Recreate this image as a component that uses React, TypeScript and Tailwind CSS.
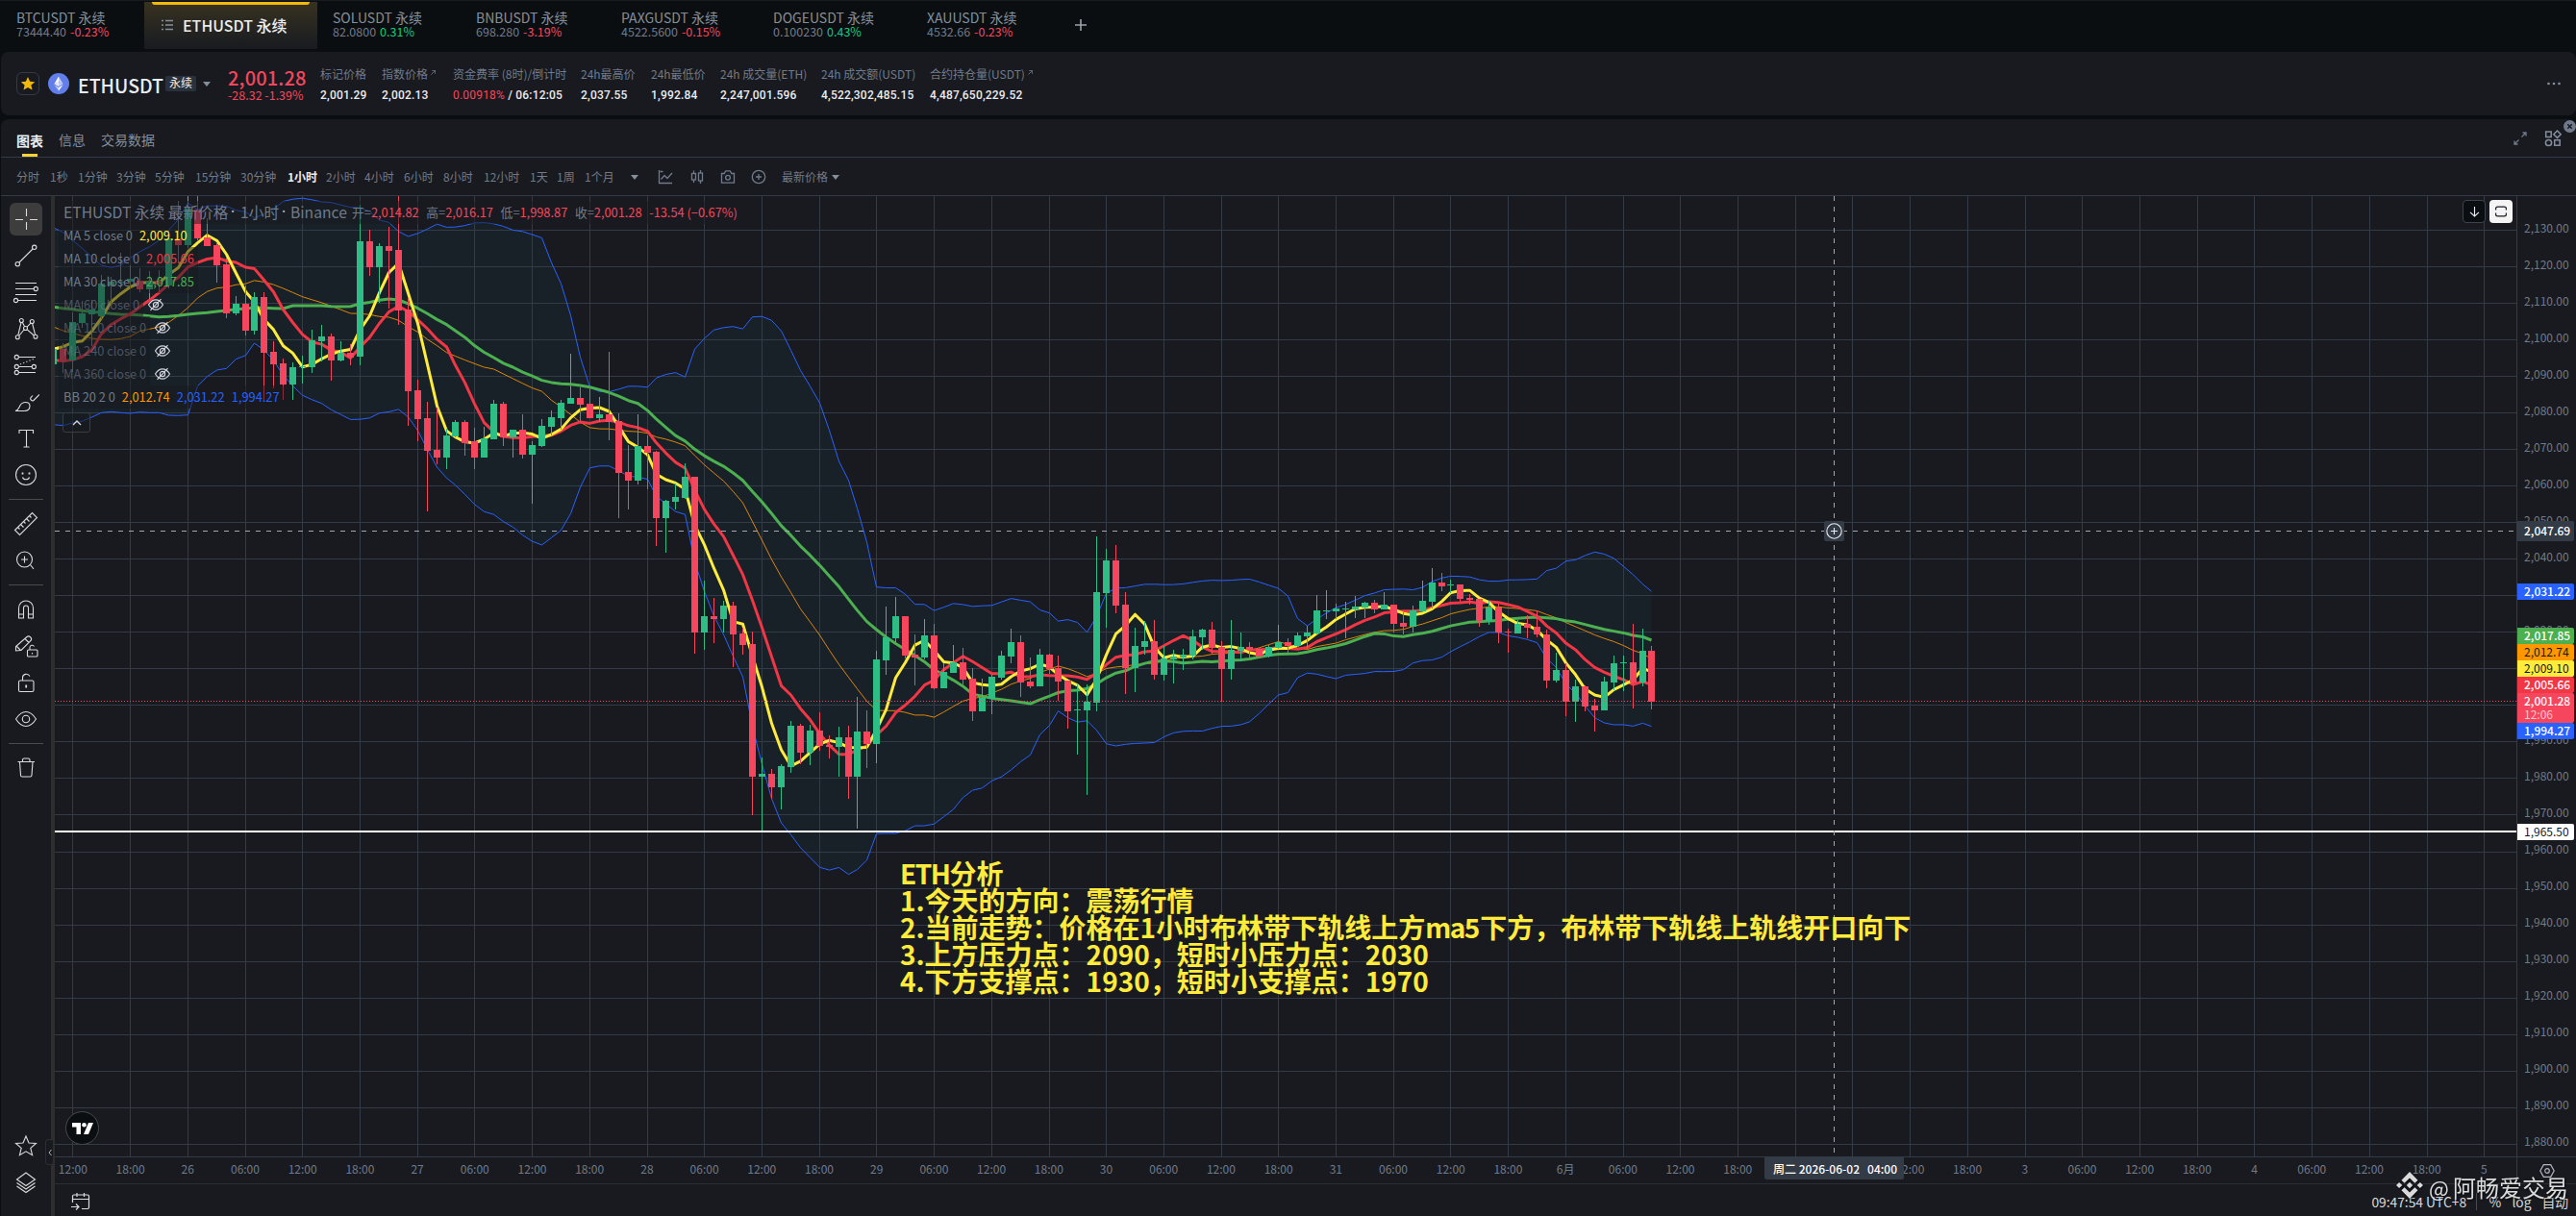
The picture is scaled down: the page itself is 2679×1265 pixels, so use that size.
import type { ReactNode } from "react";

const PANE = { left: 57, top: 204, width: 2560, height: 999 };
const UP = "#2EBD85";
const DOWN = "#F6465D";
const GRID = "#333B47";

// Bars are [up, high, body top, body bottom, low] in thirds of a pixel below `base`
type Bar = [number, number, number, number, number];

const segments: { base: number; bars: Bar[] }[] = [
  {
    base: 190,
    bars: [
      [1, 515, 520, 566, 570], [0, 500, 520, 558, 594], [1, 405, 435, 555, 590], [1, 368, 408, 437, 453],
      [1, 366, 396, 412, 510], [1, 288, 315, 418, 425], [1, 295, 308, 320, 380], [1, 220, 308, 311, 330],
      [1, 258, 300, 308, 330], [0, 266, 306, 332, 341], [1, 276, 308, 332, 362], [0, 272, 306, 318, 345],
      [1, 150, 175, 320, 330], [0, 57, 173, 194, 245], [1, 40, 80, 194, 205], [0, 40, 85, 173, 180],
      [0, 110, 170, 198, 198], [0, 185, 194, 258, 312], [0, 235, 255, 408, 423], [1, 354, 377, 408, 414],
      [0, 320, 377, 462, 477], [1, 342, 357, 462, 474], [0, 342, 357, 531, 678], [0, 495, 528, 567, 642],
      [0, 549, 563, 630, 678], [1, 562, 576, 630, 678], [1, 540, 572, 575, 627], [1, 459, 492, 575, 594],
      [1, 444, 480, 495, 558], [0, 471, 480, 555, 618], [1, 495, 531, 555, 558], [0, 504, 531, 545, 570],
      [1, 68, 183, 543, 570], [0, 147, 183, 264, 291], [1, 189, 198, 264, 375], [0, 138, 198, 213, 393],
      [0, 40, 210, 399, 444], [0, 360, 396, 651, 759], [0, 615, 648, 738, 807], [0, 684, 735, 837, 1026],
      [0, 702, 834, 858, 879], [1, 768, 789, 858, 894], [1, 741, 747, 793, 796], [0, 741, 747, 813, 852],
      [0, 765, 808, 858, 894], [1, 762, 798, 858, 858], [1, 678, 690, 801, 801], [0, 684, 690, 795, 822],
      [1, 771, 771, 796, 858], [0, 723, 771, 849, 861], [1, 807, 819, 849, 1002], [1, 738, 759, 822, 825],
      [1, 711, 732, 762, 789], [1, 678, 687, 735, 772], [1, 534, 672, 690, 690], [0, 639, 672, 693, 747],
      [0, 633, 690, 735, 735], [1, 669, 723, 735, 747], [0, 528, 723, 747, 804], [0, 720, 744, 906, 1047],
      [0, 819, 903, 930, 1020], [1, 723, 822, 930, 942], [0, 789, 822, 843, 957], [0, 837, 840, 1047, 1134],
      [1, 990, 993, 1047, 1155], [1, 939, 981, 996, 1020], [1, 876, 918, 984, 986],
    ],
  },
  {
    base: 440,
    bars: [
      [0, 168, 168, 654, 720], [1, 492, 603, 654, 708], [0, 546, 603, 612, 687], [1, 555, 570, 612, 654],
      [0, 558, 570, 660, 762], [0, 639, 657, 693, 723], [0, 651, 690, 1104, 1224], [1, 1044, 1095, 1104, 1272],
      [0, 1080, 1095, 1137, 1173], [1, 1065, 1071, 1137, 1206], [1, 930, 945, 1074, 1092], [0, 939, 945, 1029, 1065],
      [1, 942, 960, 1029, 1068], [0, 903, 960, 1008, 1023], [0, 975, 1005, 1011, 1047], [1, 948, 981, 1011, 1104],
      [0, 945, 981, 1104, 1173], [1, 855, 963, 1104, 1266], [0, 897, 963, 1002, 1077], [1, 711, 738, 1002, 1062],
      [1, 573, 669, 741, 786], [1, 543, 603, 672, 684], [0, 603, 603, 726, 735], [0, 660, 723, 732, 819],
      [1, 612, 663, 732, 738], [0, 627, 663, 828, 831], [1, 750, 777, 828, 828], [1, 693, 747, 780, 780],
      [0, 702, 747, 801, 816], [0, 765, 798, 900, 930], [1, 798, 858, 900, 900], [1, 786, 792, 861, 909],
      [1, 711, 726, 795, 801], [1, 642, 684, 729, 750], [0, 663, 684, 810, 855], [0, 732, 807, 822, 828],
      [1, 705, 723, 822, 822], [0, 720, 723, 768, 783], [0, 726, 765, 807, 867], [0, 804, 804, 900, 954],
    ],
  },
  {
    base: 540,
    bars: [
      [1, 516, 594, 597, 735], [1, 516, 570, 597, 861], [1, 54, 228, 573, 600], [1, 93, 129, 231, 339],
      [0, 81, 129, 270, 294], [0, 228, 267, 465, 546], [1, 339, 396, 465, 540], [1, 318, 381, 399, 423],
      [0, 315, 381, 486, 501], [1, 396, 435, 486, 504], [1, 408, 429, 438, 513], [1, 405, 423, 432, 471],
      [1, 345, 366, 426, 438], [1, 342, 345, 369, 408], [0, 321, 345, 402, 420], [0, 381, 399, 468, 570],
      [1, 315, 408, 468, 501], [1, 354, 399, 411, 444], [0, 384, 399, 408, 435], [0, 402, 405, 429, 432],
      [1, 393, 399, 429, 432], [1, 330, 384, 402, 405], [0, 372, 384, 396, 417], [1, 354, 363, 396, 399],
      [1, 333, 354, 366, 402], [1, 237, 285, 357, 360], [1, 222, 285, 288, 312], [1, 264, 279, 288, 312],
      [1, 258, 279, 282, 372], [1, 240, 273, 282, 309], [1, 258, 261, 276, 309], [0, 252, 261, 282, 294],
      [1, 228, 267, 282, 282], [0, 267, 267, 327, 354], [0, 291, 324, 336, 360], [1, 270, 285, 336, 354],
      [1, 192, 255, 288, 288], [1, 153, 198, 258, 279], [0, 168, 198, 210, 225], [1, 189, 204, 207, 231],
      [0, 204, 204, 249, 258], [0, 234, 246, 252, 267], [0, 249, 249, 318, 336], [1, 255, 276, 318, 330],
      [0, 264, 276, 354, 387], [0, 342, 351, 354, 417], [1, 315, 327, 357, 357], [0, 300, 327, 339, 372],
      [0, 285, 336, 360, 369], [0, 345, 360, 504, 528], [1, 417, 471, 504, 510], [0, 450, 471, 570, 615],
      [1, 501, 522, 570, 633], [0, 519, 522, 585, 600], [0, 561, 582, 597, 663], [1, 492, 507, 597, 597],
      [1, 426, 450, 510, 534], [1, 426, 447, 450, 537], [0, 327, 447, 510, 591], [1, 342, 411, 510, 522],
      [0, 396, 411, 570, 594],
    ],
  },
];

const bars = segments.flatMap(({ base, bars }) =>
  bars.map(([up, ...v]) => {
    const [high, top, bottom, low] = v.map((n) => base + n / 3);
    return { up: up === 1, high, top, bottom, low, close: up ? top : bottom };
  })
);

// the first bar sits two hours left of the first grid line
const hourX = (hour: number) => Math.floor(75.9 + 9.952 * hour);
const barX = (i: number) => hourX(i - 2);

const mean = (v: number[]) => v.reduce((a, b) => a + b, 0) / v.length;
const closes = bars.map((b) => b.close);
const lookback = (i: number, n: number) => closes.slice(i - n + 1, i + 1);

// values before the window is full come from older history
function series(seed: number[], n: number, fn: (v: number[]) => number) {
  return closes.map((_, i) => (i < seed.length || i < n - 1 ? 190 + seed[i] / 3 : fn(lookback(i, n))));
}

const spread = (v: number[]) => {
  const m = mean(v);
  return 2 * Math.sqrt(mean(v.map((x) => (x - m) ** 2)));
};

const ma5 = series([520, 512, 499, 494], 5, mean);
const ma10 = series([553, 557, 553, 543, 522, 472, 443, 425, 410], 10, mean);
const ma30 = series(
  [388, 392, 395, 400, 403, 406, 409, 411, 412, 413, 416, 419, 418, 415, 411, 408, 406, 402, 399, 395, 393, 390, 391, 392, 393, 384, 384, 384, 384],
  30,
  mean
);
const bbMid = series([450, 462, 470, 478, 486, 489, 490, 487, 480, 463, 457, 450, 436, 415, 390, 360, 340, 329, 326], 20, mean);
const bbUp = series([140, 155, 180, 205, 232, 258, 265, 258, 235, 215, 200, 180, 148, 115, 63, 85, 72, 73, 73], 20, (v) => mean(v) - spread(v));
const bbLow = series([755, 758, 750, 745, 732, 718, 715, 718, 720, 716, 718, 718, 726, 727, 725, 635, 605, 585, 580], 20, (v) => mean(v) + spread(v));

const points = (v: number[]) => v.map((y, i) => `${barX(i) + 0.5},${y.toFixed(1)}`);
const line = (v: number[]) => points(v).join(" ");

const priceY = (p: number) => 239.5 + (2130 - p) * 3.803;
const prices = Array.from({ length: 26 }, (_, i) => 2130 - i * 10);
const fmt = (n: number) => n.toLocaleString("en-US", { minimumFractionDigits: 2 });

const days = ["26", "27", "28", "29", "30", "31", "6月", "2", "3", "4", "5"];
const timeLabels = Array.from({ length: 43 }, (_, k) => {
  const q = (k + 2) % 4;
  return q === 0 ? days[(k - 2) / 4] : ["", "06:00", "12:00", "18:00"][q];
});

const tickers = [
  { name: "SOLUSDT 永续", price: "82.0800", change: "0.31%", up: true, width: "w-[149px]" },
  { name: "BNBUSDT 永续", price: "698.280", change: "-3.19%", up: false, width: "w-[151px]" },
  { name: "PAXGUSDT 永续", price: "4522.5600", change: "-0.15%", up: false, width: "w-[158px]" },
  { name: "DOGEUSDT 永续", price: "0.100230", change: "0.43%", up: true, width: "w-[160px]" },
  { name: "XAUUSDT 永续", price: "4532.66", change: "-0.23%", up: false, width: "w-[150px]" },
];

const stats = [
  { label: "标记价格", value: "2,001.29", width: "w-[64px]" },
  { label: "指数价格", value: "2,002.13", width: "w-[74px]", link: true },
  { label: "资金费率 (8时)/倒计时", value: "0.00918%", extra: " / 06:12:05", width: "w-[133px]" },
  { label: "24h最高价", value: "2,037.55", width: "w-[73px]" },
  { label: "24h最低价", value: "1,992.84", width: "w-[72px]" },
  { label: "24h 成交量(ETH)", value: "2,247,001.596", width: "w-[105px]" },
  { label: "24h 成交额(USDT)", value: "4,522,302,485.15", width: "w-[113px]" },
  { label: "合约持仓量(USDT)", value: "4,487,650,229.52", width: "w-[140px]", link: true },
];

const intervals = [
  { label: "分时", width: "w-[35px]" },
  { label: "1秒", width: "w-[29px]" },
  { label: "1分钟", width: "w-[40px]" },
  { label: "3分钟", width: "w-[40px]" },
  { label: "5分钟", width: "w-[42px]" },
  { label: "15分钟", width: "w-[47px]" },
  { label: "30分钟", width: "w-[49px]" },
  { label: "1小时", width: "w-[40px]" },
  { label: "2小时", width: "w-[40px]" },
  { label: "4小时", width: "w-[41px]" },
  { label: "6小时", width: "w-[41px]" },
  { label: "8小时", width: "w-[42px]" },
  { label: "12小时", width: "w-[48px]" },
  { label: "1天", width: "w-[28px]" },
  { label: "1周", width: "w-[29px]" },
  { label: "1个月", width: "w-[48px]" },
];

const legendRows = [
  { label: "MA 5 close 0", value: "2,009.10", color: "text-[#FFEB3B]" },
  { label: "MA 10 close 0", value: "2,005.66", color: "text-[#F23645]" },
  { label: "MA 30 close 0", value: "2,017.85", color: "text-[#4CAF50]" },
  { label: "MA 60 close 0" },
  { label: "MA 120 close 0" },
  { label: "MA 240 close 0" },
  { label: "MA 360 close 0" },
];

const ohlc = [
  { label: "开", value: "2,014.82" },
  { label: "高", value: "2,016.17" },
  { label: "低", value: "1,998.87" },
  { label: "收", value: "2,001.28" },
];

const badges = [
  { text: "2,031.22", cls: "top-[403px] bg-[#2962FF] text-white font-medium" },
  { text: "2,017.85", cls: "top-[449px] bg-[#4CAF50] text-white font-medium" },
  { text: "2,012.74", cls: "top-[466px] bg-[#FF9800] text-[#131722]" },
  { text: "2,009.10", cls: "top-[483px] bg-[#FFEB3B] text-[#131722]" },
  { text: "2,005.66", cls: "top-[500px] bg-[#F23645] text-white font-medium" },
  { text: "1,994.27", cls: "top-[548px] bg-[#2962FF] text-white font-medium" },
  { text: "1,965.50", cls: "top-[653px] bg-white text-[#131722]" },
];

function Caret({ className = "" }: { className?: string }) {
  return (
    <svg viewBox="0 0 8 5" className={`w-2 h-[5px] shrink-0 ${className}`}>
      <path d="M0 0h8L4 5z" fill="#848E9C" />
    </svg>
  );
}

function ToolGlyph({ type }: { type: string }) {
  const props = { viewBox: "0 0 28 28", fill: "none", stroke: "currentColor", strokeWidth: 1.1, className: "w-7 h-7" };
  switch (type) {
    case "cross":
      return <svg {...props}><path d="M14.5 3v8M14.5 17v8M3 14.5h8M18 14.5h8" /></svg>;
    case "trend":
      return <svg {...props}><circle cx="5.3" cy="22.7" r="2.2" /><circle cx="22.7" cy="5.3" r="2.2" /><path d="M7 21L21 7" /></svg>;
    case "fib":
      return <svg {...props}><path d="M3 4.5h22M3 10.5h19.5M3 16.5h22M6 22.5h19" /><circle cx="24.3" cy="10.5" r="2.1" /><circle cx="3.5" cy="22.5" r="2.1" /></svg>;
    case "pattern":
      return <svg {...props}><circle cx="9.3" cy="5.5" r="2" /><circle cx="20.3" cy="6.5" r="2" /><circle cx="5.3" cy="22.7" r="2" /><circle cx="24" cy="22.3" r="2" /><circle cx="13.5" cy="13.5" r="2" /><path d="M9 7.5L5.8 20.7M20.6 8.5l3 11.8M10.3 7.3l2.3 4.5M19 8.2l-4 4M7 21l5-6M15.3 14.8l7 6.2" /></svg>;
    case "projection":
      return <svg {...props}><circle cx="4.3" cy="5.5" r="2.1" /><circle cx="4.3" cy="15.5" r="2.1" /><circle cx="22.3" cy="15.5" r="2.1" /><circle cx="4.3" cy="21.5" r="2.1" /><path d="M6.5 5.5H24M6.5 15.5h13.7M6.5 21.5H24" /><path d="M8 13L23 7" strokeDasharray="1.2 2.2" /></svg>;
    case "brush":
      return <svg {...props}><path d="M3 23.5c3.500-1 3.500-3 4.800-5.500 1.200-2.300 3.200-3.500 5.700-3.500 2.500 0 4.500 1.500 4.500 3.800 0 3.200-2.300 5.200-5.500 5.200z" /><path d="M28 6.500L22 12.500c-1.500 1.200-4.200-1-3-2.800L21 7.500" /></svg>;
    case "text":
      return <svg {...props}><path d="M7 9V5.500h14.500V9M14.500 5.500v17.500M11.500 23h6" /></svg>;
    case "smile":
      return <svg {...props}><circle cx="14" cy="14" r="10.500" /><path d="M10.500 16.500c1 3 6 3 7 0" /><path d="M10.500 11.500v2M17.500 11.500v2" strokeWidth="1.800" /></svg>;
    case "ruler":
      return <svg {...props}><path d="M2.500 20.500L20.500 2.500l5 5L7.500 25.500z" /><path d="M5.500 17.500l2 2M8.500 14.500l3 3M11.500 11.500l2 2M14.500 8.500l3 3M17.500 5.500l2 2" /></svg>;
    case "zoom":
      return <svg {...props}><circle cx="12.500" cy="13" r="8" /><path d="M12.500 9.500v7M9 13h7M18.500 18.500L22 23" /></svg>;
    case "magnet":
      return <svg {...props}><path d="M6.500 23V12.500a7.500 7.500 0 0115 0V23h-5V12.500a2.500 2.500 0 00-5 0V23zM6.500 19h5M16.500 19h5" /></svg>;
    case "pencil":
      return <svg {...props}><path d="M3.500 19v-4.500L15 4.500c2.500-2 6 1.500 4 4L9 18.500zM13 6.500l4 4M4.500 14.500l4 4" /><rect x="15.500" y="18" width="10.500" height="7" rx="1" /><path d="M18 18v-2.500c0-2.500 3.500-3 4.500-1M20.500 21v1.500" /></svg>;
    case "lock":
      return <svg {...props}><rect x="6.500" y="12" width="15.500" height="11.500" rx="1.500" /><path d="M10.500 12V9c0-4 5.500-5.200 7.500-1.500" /><path d="M14.200 16.500v3" strokeWidth="1.800" /></svg>;
    case "eye":
      return <svg {...props}><path d="M3.500 14c3.500-5.500 6.500-7.500 10.500-7.500s7 2 10.500 7.500c-3.500 5.500-6.500 7.500-10.500 7.500S7 19.500 3.500 14z" /><circle cx="14" cy="14" r="3.700" /></svg>;
    case "trash":
      return <svg {...props}><path d="M5.500 7.500h17.500M10.500 7V5.500c0-1 .7-1.500 1.500-1.500h4.500c.8 0 1.500.5 1.500 1.500V7M7.500 7.500l1 14c.1 1 .7 1.500 1.500 1.500h8.500c.8 0 1.400-.5 1.500-1.500L21 7.500" /></svg>;
    case "star":
      return <svg {...props}><path d="M14 4l3 7 7.500.500-5.700 4.900 1.800 7.300L14 19.800l-6.600 3.900 1.800-7.300-5.700-4.900L11 11z" /></svg>;
    default:
      return <svg {...props}><path d="M14 4l9.500 7L14 17.500 4.500 11zM4.500 14.500L14 21l9.500-6.500M4.500 18L14 24.500l9.500-6.500" /></svg>;
  }
}

function Tool({ type, active }: { type: string; active?: boolean }) {
  return (
    <div className="h-[38px] flex items-center justify-center text-[#DBDBDB]">
      <div className={active ? "w-[34px] h-[34px] rounded-md bg-[#3D3D3D] flex items-center justify-center" : "flex"}>
        <ToolGlyph type={type} />
      </div>
    </div>
  );
}

function Separator() {
  return (
    <div className="h-[13px] flex items-center justify-center">
      <div className="w-9 h-px bg-[#4A4A4A]" />
    </div>
  );
}

function HiddenEye() {
  return (
    <svg viewBox="0 0 18 14" className="w-[18px] h-[14px]" fill="none" stroke="#D1D4DC" strokeWidth="1.200">
      <path d="M1.500 7C4 3 6.500 1.800 9 1.800S14 3 16.500 7C14 11 11.500 12.200 9 12.200S4 11 1.500 7z" />
      <circle cx="9" cy="7" r="2.600" />
      <path d="M3.500 12.800L14.500 1.200" />
    </svg>
  );
}

function TickerTab({ name, price, change, up, width }: { name: string; price: string; change: string; up: boolean; width: string }) {
  return (
    <div className={`${width} pl-4 pt-[9px] shrink-0`}>
      <div className="text-[14px] leading-4 text-[#848E9C]">{name}</div>
      <div className="text-[12.500px] leading-[13px] flex gap-1">
        <span className="text-[#707A8A]">{price}</span>
        <span className={up ? "text-[#0ECB81]" : "text-[#F6465D]"}>{change}</span>
      </div>
    </div>
  );
}

function TopTabs() {
  return (
    <div className="h-[54px] flex border-t border-[#181A20]">
      <div className="ml-px flex">
        <TickerTab name="BTCUSDT 永续" price="73444.40" change="-0.23%" up={false} width="w-[149px]" />
      </div>
      <div className="w-[180px] h-[49px] mt-px bg-linear-to-b from-[#38321F] to-[#181A20] flex flex-col">
        <div className="h-[3px] mx-2 bg-[#F0B90B] rounded-b-sm" />
        <div className="flex items-center pl-[18px] h-[42px] gap-[10px]">
          <svg viewBox="0 0 12 12" className="w-3 h-3" stroke="#848E9C" strokeWidth="1.500">
            <path d="M0 1.500h2M4 1.500h8M0 6h2M4 6h8M0 10.500h2M4 10.500h8" />
          </svg>
          <span className="text-[16px] font-medium text-[#EAECEF]">ETHUSDT 永续</span>
        </div>
      </div>
      {tickers.map((t) => (
        <TickerTab key={t.name} {...t} />
      ))}
      <svg viewBox="0 0 12 12" className="w-3 h-3 mt-[19px] ml-5" stroke="#9AA2AD" strokeWidth="1.600">
        <path d="M6 0v12M0 6h12" />
      </svg>
    </div>
  );
}

function SymbolHeader() {
  return (
    <div className="h-[66px] ml-px rounded-lg bg-[#181A20] flex items-center pl-4 font-[Roboto,'Noto_Sans_CJK_SC',sans-serif]">
      <div className="w-6 h-6 rounded-md border border-[#333B47] flex items-center justify-center">
        <svg viewBox="0 0 24 24" className="w-4 h-4" fill="#F0B90B">
          <path d="M12 1.500l3.200 7 7.600.8-5.700 5.100 1.600 7.500L12 18.100l-6.700 3.800 1.600-7.500L1.200 9.300l7.600-.8z" />
        </svg>
      </div>
      <svg viewBox="0 0 22 22" className="w-[22px] h-[22px] ml-[9px]">
        <circle cx="11" cy="11" r="11" fill="#627EEA" />
        <path d="M11 3.500v5.700l4.600 2z" fill="#C0CCF7" />
        <path d="M11 3.500l-4.600 7.700 4.600-2zM11 14.900v3.600l4.600-6.300z" fill="#fff" />
        <path d="M11 18.500v-3.600l-4.600-2.700zM11 14l4.600-2.800-4.600-2z" fill="#C0CCF7" />
        <path d="M6.400 11.200L11 14V9.200z" fill="#E6EBFC" />
      </svg>
      <span className="w-[100px] pl-[9px] pt-[3px] text-[19.500px] font-medium text-[#EAECEF] font-['Noto_Sans_CJK_SC']">ETHUSDT</span>
      <span className="w-8 h-4 rounded-xs bg-[#29313D] text-[#EAECEF] text-[12px] leading-4 text-center">永续</span>
      <Caret className="ml-[7px]" />
      <div className="ml-[18px] w-[96px] text-[#F6465D]">
        <div className="text-[20px] leading-6 tracking-[0.15px] font-['Noto_Sans_CJK_SC'] font-medium">2,001.28</div>
        <div className="text-[12.500px] leading-3 whitespace-nowrap font-['Noto_Sans_CJK_SC']">-28.32 -1.39%</div>
      </div>
      {stats.map((s) => (
        <div key={s.label} className={`${s.width} shrink-0 flex flex-col gap-2 pt-px text-[12px] leading-[15px] whitespace-nowrap`}>
          <div className="text-[#707A8A] flex font-['Noto_Sans_CJK_SC']">
            {s.label}
            {s.link && (
              <svg viewBox="0 0 6 6" className="w-[5px] h-[5px] mt-1 ml-[3px]" fill="none" stroke="#707A8A">
                <path d="M.5 5.500l5-5M1.500.5h4v4" />
              </svg>
            )}
          </div>
          <div className="text-[#EAECEF] font-medium tracking-[0.2px]">
            {s.extra ? (
              <>
                <span className="text-[#F6465D] font-normal">{s.value}</span>
                {s.extra}
              </>
            ) : (
              s.value
            )}
          </div>
        </div>
      ))}
      <svg viewBox="0 0 16 4" className="w-4 h-1 ml-auto mr-[15px]" fill="#848E9C">
        <circle cx="2.500" cy="2" r="1.300" /><circle cx="8" cy="2" r="1.300" /><circle cx="13.500" cy="2" r="1.300" />
      </svg>
    </div>
  );
}

function PanelTabs() {
  return (
    <div className="h-10 flex items-center pl-4 border-b border-[#333B47] text-[14px] text-[#848E9C] relative">
      <div className="w-11 h-full flex flex-col items-start">
        <span className="h-9 leading-[44px] font-bold text-[#EAECEF]">图表</span>
        <span className="w-4 h-[3px] ml-1.5 bg-[#FCD535]" />
      </div>
      <span className="w-11 pt-1">信息</span>
      <span className="pt-1">交易数据</span>
      <svg viewBox="0 0 14 14" className="w-[14px] h-[14px] ml-auto" fill="none" stroke="#707A8A" strokeWidth="1.300">
        <path d="M1 13L5.500 8.500M8.500 5.500L13 1M9.500 1H13v3.500M4.500 13H1V9.500" />
      </svg>
      <svg viewBox="0 0 18 18" className="w-[18px] h-[18px] ml-[18px] mr-[15px]" fill="none" stroke="#848E9C" strokeWidth="1.500">
        <rect x="1.700" y="2" width="5.500" height="5.500" /><rect x="10.700" y="10.700" width="5.500" height="5.500" />
        <circle cx="4.500" cy="13.500" r="3.100" /><path d="M13.500 1l3.700 3.700-3.700 3.700-3.700-3.700z" />
      </svg>
      <svg viewBox="0 0 13 13" className="absolute right-0 top-px w-[13px] h-[13px]">
        <circle cx="6.500" cy="6.500" r="6.500" fill="#707A8A" />
        <path d="M4.300 4.300l4.400 4.400M8.700 4.300L4.300 8.700" stroke="#181A20" strokeWidth="1.500" />
      </svg>
    </div>
  );
}

function IntervalBar() {
  return (
    <div className="h-10 flex items-center pl-4 pt-px border-b border-[#333B47] text-[12px] text-[#707A8A] whitespace-nowrap">
      {intervals.map(({ label, width }) => (
        <span key={label} className={`${width} shrink-0 ${label === "1小时" ? "text-[#EAECEF] font-bold" : ""}`}>{label}</span>
      ))}
      <Caret />
      <svg viewBox="0 0 16 16" className="w-4 h-4 ml-[20px]" fill="none" stroke="#707A8A" strokeWidth="1.300">
        <path d="M1.500 1v13.500H15M3.500 10.500L7 6.500l3 3 5-5.500M2.500 2.500h3" />
      </svg>
      <svg viewBox="0 0 16 16" className="w-4 h-4 ml-[17px]" fill="none" stroke="#707A8A" strokeWidth="1.300">
        <path d="M4.500 1.500v3M4.500 11v3M11.500 1v3M11.500 12v3" /><rect x="2.500" y="4.500" width="4" height="6.500" /><rect x="9.500" y="4" width="4" height="8" />
      </svg>
      <svg viewBox="0 0 16 16" className="w-4 h-4 ml-[16px]" fill="none" stroke="#707A8A" strokeWidth="1.300">
        <path d="M1.500 4.500h2.700l1.500-2.700h4.600l1.500 2.700h2.700v9.700H1.500z" /><circle cx="8" cy="8.800" r="2.400" />
      </svg>
      <svg viewBox="0 0 16 16" className="w-4 h-4 ml-[16px]" fill="none" stroke="#707A8A" strokeWidth="1.300">
        <circle cx="8" cy="8" r="6.700" /><path d="M8 5v6M5 8h6" />
      </svg>
      <span className="ml-[16px]">最新价格</span>
      <Caret className="ml-[4px]" />
    </div>
  );
}

function ChartCanvas() {
  const right = PANE.left + PANE.width;
  const bottom = PANE.top + PANE.height;
  return (
    <svg viewBox={`${PANE.left} ${PANE.top} ${PANE.width} ${PANE.height}`} className="block w-[2560px] h-[999px]">
      <polygon points={[...points(bbUp), ...points(bbLow).reverse()].join(" ")} fill="#2196C3" fillOpacity="0.050" />
      <g fill={GRID} shapeRendering="crispEdges">
        {timeLabels.map((_, k) => (
          <rect key={k} x={hourX(k * 6)} y={PANE.top} width="1" height={PANE.height} />
        ))}
        {prices.map((p) => (
          <rect key={p} x={PANE.left} y={Math.floor(priceY(p))} width={PANE.width} height="1" />
        ))}
      </g>
      <g fill="none" strokeLinejoin="round">
        <polyline points={line(bbMid)} stroke="#FF9800" strokeOpacity="0.850" />
        <polyline points={line(bbUp)} stroke="#2962FF" />
        <polyline points={line(bbLow)} stroke="#2962FF" />
        <polyline points={line(ma30)} stroke="#4CAF50" strokeWidth="3" />
        <polyline points={line(ma10)} stroke="#F23645" strokeWidth="3" />
        <polyline points={line(ma5)} stroke="#FFEB3B" strokeWidth="3" />
      </g>
      <g shapeRendering="crispEdges">
        {bars.map((b, i) => {
          const x = barX(i);
          const top = Math.round(b.top);
          const high = Math.round(b.high);
          return (
            <g key={i} fill={b.up ? UP : DOWN}>
              <rect x={x} y={high} width="1" height={Math.round(b.low) - high} />
              <rect x={x - 3} y={top} width="7" height={Math.max(1, Math.round(b.bottom) - top)} />
            </g>
          );
        })}
        <path d={`M${PANE.left} 729.500H${right}`} stroke={DOWN} strokeDasharray="1 2" />
        <rect x={PANE.left} y="864" width={PANE.width} height="2" fill="#fff" />
        <path d={`M${PANE.left} 552.500H${right}M1907.500 ${PANE.top}V${bottom}`} stroke="#A3A8AF" strokeDasharray="5 6" />
      </g>
    </svg>
  );
}

function Legend() {
  return (
    <div className="absolute left-1 top-[5px] flex flex-col items-start text-[12.800px] text-[#707A8A] whitespace-nowrap">
      <div className="h-6 pl-[5px] pr-2 bg-[#181A20]/50 flex items-center">
        <div className="flex items-center text-[15.700px]">
          <span className="w-[174px]">ETHUSDT 永续 最新价格</span>
          <span className="w-[10px] text-[#B2B5BE] font-['Noto_Sans']">·</span>
          <span className="w-[43px]">1小时</span>
          <span className="w-[9px] text-[#B2B5BE] font-['Noto_Sans']">·</span>
          <span className="w-[64px]">Binance</span>
        </div>
        {ohlc.map((o) => (
          <span key={o.label} className="w-[77.300px]">
            {o.label}=<span className="text-[#F6465D]">{o.value}</span>
          </span>
        ))}
        <span className="text-[#F6465D]">-13.54 (−0.67%)</span>
      </div>
      {legendRows.map((r) => (
        <div key={r.label} className="h-6 flex items-center">
          <span className={`h-6 leading-6 pl-[5px] bg-[#181A20]/50 ${r.value ? "pr-[7px]" : "pr-1 text-[#707A8A]/60"}`}>{r.label}</span>
          {r.value ? (
            <span className={`h-6 leading-6 pr-1 bg-[#181A20]/50 ${r.color}`}>{r.value}</span>
          ) : (
            <span className="ml-1"><HiddenEye /></span>
          )}
        </div>
      ))}
      <div className="h-6 leading-6 pl-[5px] pr-1 bg-[#181A20]/50 flex">
        <span className="mr-[7px]">BB 20 2 0</span>
        <span className="w-[57px] text-[#FF9800]">2,012.74</span>
        <span className="w-[57px] text-[#2962FF]">2,031.22</span>
        <span className="text-[#2962FF]">1,994.27</span>
      </div>
      <div className="mt-[4px] ml-1 w-[29px] h-[21px] rounded-[3px] border border-[#3D3D3D] bg-[#181A20]/60 flex items-center justify-center">
        <svg viewBox="0 0 10 6" className="w-[10px] h-1.5" fill="none" stroke="#D1D4DC" strokeWidth="1.300">
          <path d="M1 5l4-4 4 4" />
        </svg>
      </div>
    </div>
  );
}

function Notes() {
  return (
    <div className="absolute left-[879px] top-[690px] text-[28px] leading-7 font-bold text-[#FFEB3B] whitespace-nowrap">
      <div><span className="tracking-[-1.500px]">ETH</span>分析</div>
      <div>1.今天的方向：震荡行情</div>
      <div>2.当前走势：价格在1小时布林带下轨线上方<span className="tracking-[-1.500px]">ma</span>5下方，布林带下轨线上轨线开口向下</div>
      <div>3.上方压力点：2090，短时小压力点：2030</div>
      <div>4.下方支撑点：1930，短时小支撑点：1970</div>
    </div>
  );
}

function Overlay({ className, children }: { className: string; children: ReactNode }) {
  return <div className={`absolute flex items-center justify-center ${className}`}>{children}</div>;
}

function PriceAxis() {
  return (
    <div className="relative w-[62px] h-[999px] border-l border-[#333B47] overflow-hidden text-[12px] text-[#707A8A] pt-[14px]">
      {prices.map((p) => (
        <div key={p} className="h-[38.030px] leading-[38px] pl-[7px]">{fmt(p)}</div>
      ))}
      <div className="absolute left-0 top-[338px] w-[59px] h-[21px] leading-[19px] pl-[7px] rounded-r-xs bg-[#333B47] text-white font-medium">2,047.69</div>
      {badges.map((b) => (
        <div key={b.text} className={`absolute left-0 w-[59px] h-[17px] leading-[15px] pl-[7px] rounded-r-xs ${b.cls}`}>{b.text}</div>
      ))}
      <div className="absolute left-0 top-[517px] w-[59px] h-[31px] pl-[7px] rounded-r-xs bg-[#F6465D] text-white">
        <div className="leading-[15px] font-medium">2,001.28</div>
        <div className="leading-[13px] text-white/70">12:06</div>
      </div>
    </div>
  );
}

function TimeAxis() {
  return (
    <div className="relative h-7 border-t border-[#333B47] flex">
      <div className="w-[2560px] shrink-0 overflow-hidden flex text-[12px] leading-[24px] text-[#707A8A]">
        {timeLabels.map((t, k) => (
          <span key={k} className="w-[59.712px] shrink-0 text-center first:-ml-[11px]">{t}</span>
        ))}
      </div>
      <div className="w-[62px] border-l border-[#333B47] flex items-center justify-center">
        <svg viewBox="0 0 16 16" className="w-4 h-4" fill="none" stroke="#B2B5BE" strokeWidth="1.200">
          <path d="M4.300 1.700h7.400L15.200 8l-3.500 6.300H4.300L.8 8z" /><circle cx="8" cy="8" r="2.300" />
        </svg>
      </div>
      <div className="absolute left-[1778px] -top-px w-[145px] h-6 rounded-b-xs bg-[#333B47] text-white text-[12px] leading-[25px] font-medium pl-[9px] whitespace-pre">周二 2026-06-02   04:00</div>
    </div>
  );
}

function Footer() {
  return (
    <div className="relative flex-1 border-t border-[#2A2E35] flex items-center text-[13.800px] text-[#DBDBDB]">
      <svg viewBox="0 0 20 20" className="w-5 h-5 ml-[17px] mt-0.5" fill="none" stroke="currentColor" strokeWidth="1.200">
        <path d="M1.500 11V4.500c0-1 .5-1.500 1.500-1.500h14c1 0 1.500.5 1.500 1.500V16c0 1-.5 1.500-1.500 1.500h-6M1.500 7.500h17M6 1v4M13.500 1v4M0 15.500h7.500M5 12.500l3 3-3 3" />
      </svg>
      <div className="ml-auto flex items-center pt-[3px] pr-2 whitespace-nowrap">
        <span className="w-[109px]">09:47:54 UTC+8</span>
        <span className="w-px h-[18px] bg-[#4A4A4A]" />
        <span className="ml-3 w-6">%</span>
        <span className="w-[31px]">log</span>
        <span>自动</span>
      </div>
      <div className="absolute right-[8px] -top-[13px] h-8 flex items-center text-white/85 text-[24px] leading-8 whitespace-nowrap drop-shadow-[1px_1px_1px_rgba(0,0,0,0.8)]">
        <svg viewBox="0 0 28 28" className="w-7 h-7 mr-1.5 -mt-1" fill="currentColor">
          <path d="M8.600 11.800L14 6.400l5.400 5.400 3.100-3.100L14 0 5.500 8.700zM0 14l3.100-3.100L6.300 14l-3.200 3.100zM8.600 16.200L14 21.600l5.400-5.400 3.100 3.100L14 28l-8.500-8.700zM21.700 14l3.200-3.100L28 14l-3.100 3.100zM17.200 14L14 10.800 10.800 14l3.200 3.200z" />
        </svg>
        <span className="w-[25px] text-[22px]">@</span>
        <span>阿畅爱交易</span>
      </div>
    </div>
  );
}

export default function App() {
  return (
    <div className="w-[2679px] h-[1265px] bg-[#0B0E11] overflow-hidden flex flex-col font-['Noto_Sans_CJK_SC',sans-serif]">
      <TopTabs />
      <SymbolHeader />
      <div className="flex-1 mt-1 ml-px rounded-t-lg bg-[#181A20] flex flex-col min-h-0">
        <PanelTabs />
        <IntervalBar />
        <div className="flex flex-1 min-h-0">
          {/* Drawing tools */}
          <div className="relative w-[56px] pt-[5px] pb-4 border-r-4 border-[#2E2E2E] flex flex-col">
            <Tool type="cross" active />
            {["trend", "fib", "pattern", "projection", "brush", "text", "smile"].map((t) => <Tool key={t} type={t} />)}
            <Separator />
            <Tool type="ruler" />
            <Tool type="zoom" />
            <Separator />
            {["magnet", "pencil", "lock", "eye"].map((t) => <Tool key={t} type={t} />)}
            <Separator />
            <Tool type="trash" />
            <div className="mt-auto">
              <Tool type="star" />
              <Tool type="layers" />
            </div>
            <Overlay className="-right-[3px] bottom-[53px] w-[9px] h-[27px] rounded-[3px] bg-[#181A20] border border-[#2E2E2E]">
              <svg viewBox="0 0 4 8" className="w-1 h-2" fill="none" stroke="#B2B5BE"><path d="M3.500 1L1 4l2.500 3" /></svg>
            </Overlay>
          </div>

          {/* Chart */}
          <div className="flex-1 flex flex-col min-w-0">
            <div className="flex">
              <div className="relative w-[2560px] h-[999px] overflow-hidden">
                <ChartCanvas />
                <Legend />
                <Notes />
                <Overlay className="left-[1840px] top-[338px] w-[21px] h-[21px] rounded-xs bg-[#333B47]">
                  <svg viewBox="0 0 17 17" className="w-[17px] h-[17px]" fill="none" stroke="#EAECEF" strokeWidth="1.100">
                    <circle cx="8.500" cy="8.500" r="7.700" /><path d="M8.500 5v7M5 8.500h7" />
                  </svg>
                </Overlay>
                <Overlay className="left-[2504px] top-1 w-6 h-6 rounded bg-[#0B0E11] border border-[#3D434C]">
                  <svg viewBox="0 0 12 12" className="w-3 h-3" fill="none" stroke="#EAECEF" strokeWidth="1.100"><path d="M6.500 1v10M2 6.800L6.500 11 11 6.800" /></svg>
                </Overlay>
                <Overlay className="left-[2532px] top-1 w-6 h-6 rounded bg-[#F4F4F4]">
                  <svg viewBox="0 0 12 12" className="w-3 h-3" fill="none" stroke="#181A20" strokeWidth="1.200"><path d="M.6 4.500V3c0-1.200.8-1.900 2-1.900h6.800c1.200 0 2 .7 2 1.900v1.500M.6 7.500V9c0 1.200.8 1.900 2 1.900h6.800c1.200 0 2-.7 2-1.900V7.500" /></svg>
                </Overlay>
                <Overlay className="left-[11px] top-[952px] w-[35px] h-[35px] rounded-full bg-[#0B0E11] border border-[#4A4A4A]">
                  <svg viewBox="0 0 22 12" className="w-[22px] h-3" fill="#fff">
                    <path d="M0 0h9v12H4.500V4.500H0zM17 0h5l-5 12h-5z" /><circle cx="12.500" cy="2.300" r="2.300" />
                  </svg>
                </Overlay>
              </div>
              <PriceAxis />
            </div>
            <TimeAxis />
            <Footer />
          </div>
        </div>
      </div>
    </div>
  );
}
